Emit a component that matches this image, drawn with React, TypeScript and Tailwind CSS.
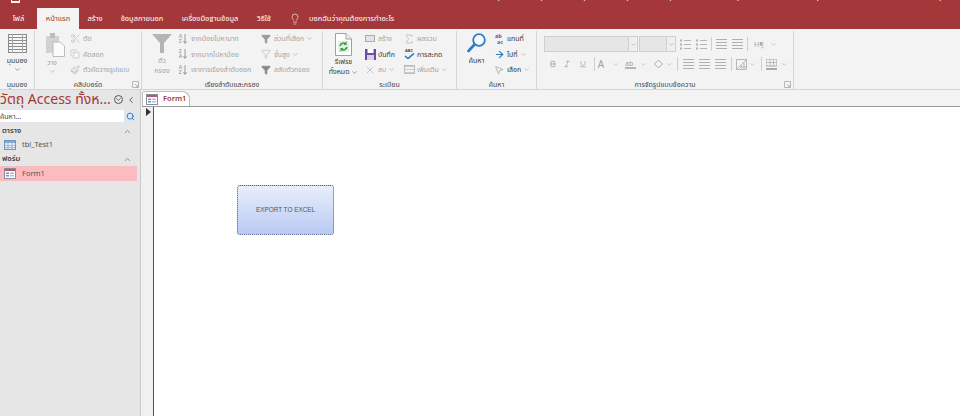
import React from 'react';
import {
  Scissors,
  Copy,
  Paintbrush,
  Filter,
  ChevronDown,
  ChevronUp,
  ChevronLeft,
  Search,
  ArrowRight,
  MousePointer2,
  X,
  Sigma,
  Lightbulb,
  Bold,
  Italic,
  Underline,
} from 'lucide-react';

const font = { fontFamily: '"Noto Sans", "Noto Sans Thai", "Liberation Sans", sans-serif' };

const tabs = [
  { label: 'ไฟล์', width: 'w-[37px]' },
  { label: 'หน้าแรก', width: 'w-[42px]' },
  { label: 'สร้าง', width: 'w-[32px]' },
  { label: 'ข้อมูลภายนอก', width: 'w-[62px]' },
  { label: 'เครื่องมือฐานข้อมูล', width: 'w-[74px]' },
  { label: 'วิธีใช้', width: 'w-[34px]' },
];

const Caret = ({ className = 'text-[#a0a0a0]' }: { className?: string }) => (
  <ChevronDown size={7} strokeWidth={2} className={`inline shrink-0 ${className}`} />
);

const Launcher = () => (
  <svg width="7" height="7" viewBox="0 0 7 7" className="shrink-0">
    <path d="M0.5 0.5H6.5V6.5H0.5Z M3 3L6 6 M6 4V6H4" fill="none" stroke="#a8a8a8" strokeWidth="0.8" />
  </svg>
);

// one ribbon group: controls on top, caption at the bottom
const Group = ({
  width,
  label,
  launcher,
  children,
}: {
  width: string;
  label: string;
  launcher?: boolean;
  children: React.ReactNode;
}) => (
  <div className={`${width} shrink-0 flex flex-col border-r border-[#d6d6d6] h-[58px]`}>
    <div className="flex-1 flex min-h-0">{children}</div>
    <div className="h-[9px] flex items-center justify-center relative text-[7px] text-[#444] leading-none">
      {label}
      {launcher && (
        <span className="absolute right-[2px] top-[1px]">
          <Launcher />
        </span>
      )}
    </div>
  </div>
);

const SmallRow = ({
  icon,
  text,
  dim = true,
  caret,
}: {
  icon: React.ReactNode;
  text: string;
  dim?: boolean;
  caret?: boolean;
}) => (
  <div className={`h-[15.5px] flex items-center gap-[2px] whitespace-nowrap text-[7px] leading-none ${dim ? 'text-[#a4a4a4]' : 'text-[#3a3a3a]'}`}>
    <span className="w-[12px] h-[12px] flex items-center justify-center shrink-0">{icon}</span>
    {text}
    {caret && <Caret />}
  </div>
);

const ViewIcon = () => (
  <svg width="19" height="19" viewBox="0 0 19 19">
    <rect x="0.5" y="0.5" width="18" height="18" fill="#f7f7f7" stroke="#8a8a8a" />
    {[3.5, 6.5, 9.5, 12.5, 15.5].map((y) => (
      <path key={y} d={`M0 ${y}H19`} stroke="#8a8a8a" />
    ))}
    <path d="M4.5 0V19M14.5 0V19" stroke="#a8a8a8" />
  </svg>
);

const PasteIcon = () => (
  <svg width="19" height="24" viewBox="0 0 19 24" className="ml-[6px]">
    <rect x="0" y="3" width="13" height="17" fill="#d2d2d2" />
    <rect x="4" y="0" width="5" height="5" fill="#bdbdbd" />
    <path d="M7 9H14L18.5 13V23.5H7Z" fill="#fbfbfb" stroke="#bcbcbc" />
  </svg>
);

const BigFunnel = () => (
  <svg width="20" height="19" viewBox="0 0 20 19">
    <path d="M0 0H20L12 9V19H8V9Z" fill="#b4b4b4" />
  </svg>
);

const SortIcon = ({ top, bottom }: { top: string; bottom: string }) => (
  <span className="flex items-center gap-[1px]">
    <span className="flex flex-col text-[5px] leading-[5px] text-[#aaa] font-bold">
      <span>{top}</span>
      <span>{bottom}</span>
    </span>
    <svg width="4" height="10" viewBox="0 0 4 10">
      <path d="M2 0V9M0.5 7L2 9.5L3.5 7" stroke="#9a9a9a" fill="none" />
    </svg>
  </span>
);

const RefreshDoc = () => (
  <svg width="17" height="23" viewBox="0 0 17 23">
    <path d="M0.5 0.5H11L16.5 6V22.5H0.5Z" fill="#fdfdfd" stroke="#a0a0a0" />
    <path d="M11 0.5V6H16.5" fill="#eee" stroke="#a0a0a0" />
    <rect x="3" y="8" width="11" height="11" fill="#e3efe4" />
    <path d="M5 13a3.6 3.6 0 0 1 6-2M12 14a3.6 3.6 0 0 1-6 2" fill="none" stroke="#3b9c4a" strokeWidth="1.6" />
    <path d="M11.5 8V12H8.5Z M5.5 19V15H8.5Z" fill="#3b9c4a" />
  </svg>
);

const SaveIcon = () => (
  <svg width="11" height="11" viewBox="0 0 11 11">
    <rect width="11" height="11" fill="#6f4aa8" />
    <rect x="2.5" y="0" width="6" height="4" fill="#fff" />
    <rect x="2" y="6" width="7" height="5" fill="#dcd0e6" />
  </svg>
);

const SpellIcon = () => (
  <span className="flex flex-col items-center leading-none">
    <span className="text-[4px] font-bold text-[#444]">ABC</span>
    <svg width="11" height="6" viewBox="0 0 11 6">
      <path d="M1 3L4 5.5L10 0.5" fill="none" stroke="#2a72c0" strokeWidth="1.6" />
    </svg>
  </span>
);

const BigSearch = () => (
  <svg width="19" height="20" viewBox="0 0 19 20">
    <circle cx="12" cy="7" r="5.8" fill="#f7fbff" stroke="#2d7cc4" strokeWidth="1.8" />
    <path d="M7.5 11.5L1.5 18" stroke="#2d7cc4" strokeWidth="2.6" strokeLinecap="round" />
  </svg>
);

const ReplaceIcon = () => (
  <span className="flex flex-col leading-[6px] text-[5.5px] font-bold">
    <span className="text-[#6f4aa8]">ab</span>
    <span className="text-[#2d7cc4] pl-[2px]">ac</span>
  </span>
);

const ListIcon = () => (
  <svg width="11" height="11" viewBox="0 0 11 11">
    {[1.5, 5.5, 9.5].map((y) => (
      <g key={y}>
        <rect x="0" y={y - 1} width="2" height="2" fill="#b0b0b0" />
        <path d={`M4 ${y}H11`} stroke="#b5b5b5" />
      </g>
    ))}
  </svg>
);

const Lines = ({ className = '' }: { className?: string }) => (
  <span className={`flex flex-col gap-[2px] w-[11px] shrink-0 ${className}`}>
    <span className="h-px bg-[#b0b0b0] block" />
    <span className="h-px bg-[#b0b0b0] block" />
    <span className="h-px bg-[#b0b0b0] block" />
    <span className="h-px bg-[#b0b0b0] block" />
  </span>
);

const Sep = ({ className }: { className: string }) => (
  <span className={`w-px h-[14px] bg-[#cfcfcf] shrink-0 ${className}`} />
);

const FormIcon = () => (
  <svg width="12" height="11" viewBox="0 0 12 11" className="shrink-0">
    <rect x="0.5" y="0.5" width="11" height="10" fill="#fff" stroke="#8d8d99" />
    <rect x="1" y="1" width="10" height="2" fill="#b25a72" />
    <rect x="2" y="4.5" width="3" height="1.5" fill="#6f94c8" />
    <rect x="2" y="7" width="3" height="1.5" fill="#6f94c8" />
    <rect x="6" y="4.5" width="4" height="1.5" fill="#a9c0de" />
    <rect x="6" y="7" width="4" height="1.5" fill="#a9c0de" />
  </svg>
);

const TableIcon = () => (
  <svg width="12" height="10" viewBox="0 0 12 10" className="shrink-0">
    <rect x="0.5" y="0.5" width="11" height="9" fill="#e4ecf6" stroke="#6f93bd" />
    <rect x="1" y="1" width="10" height="2" fill="#86a8d2" />
    <path d="M0.5 5.5H11.5M0.5 7.5H11.5M4 3V9.5M8 3V9.5" stroke="#86a8d2" strokeWidth="0.7" />
  </svg>
);

export default function App() {
  return (
    <div className="w-[960px] h-[416px] overflow-hidden flex flex-col bg-white" style={font}>
      {/* title bar + tabs */}
      <div className="h-[29px] bg-[#a4373a] shrink-0 flex flex-col">
        <div className="h-[8px] relative overflow-hidden">
          <span className="absolute left-[11px] top-0 w-[9px] h-[3px] border-x border-b-2 border-white" />
          <span className="absolute left-[494px] top-[-11px] text-[10px] leading-none text-white whitespace-nowrap">
            บุญงานนนบุญงานนนบุญงานนนบุญงานนนบุญงานนนนนนนบุญงานนนนนนนนนบุญงานนนนนนนนนนนนนนนนบุญ
          </span>
        </div>
        <div className="flex-1 flex items-stretch text-[7.5px] text-white">
          {tabs.map((t, i) => (
            <div
              key={t.label}
              className={`flex items-center justify-center leading-none ${t.width} ${
                i === 1 ? 'bg-[#f3f3f3] text-[#a4373a]' : ''
              }`}
            >
              {t.label}
            </div>
          ))}
          <div className="flex items-center gap-[8px] pl-[8px] text-[7.5px]">
            <Lightbulb size={12} strokeWidth={1.2} />
            บอกฉันว่าคุณต้องการทำอะไร
          </div>
        </div>
      </div>

      {/* ribbon */}
      <div className="h-[61px] shrink-0 bg-[#f3f3f3] border-b border-[#d4d4d4] flex items-start pt-[2px]">
        <Group width="w-[35px]" label="มุมมอง">
          <div className="w-full flex flex-col items-center pt-[3px] text-[7px] leading-none text-[#3a3a3a]">
            <ViewIcon />
            <span className="mt-[4px]">มุมมอง</span>
            <Caret className="mt-[2px] text-[#666]" />
          </div>
        </Group>
        <Group width="w-[107px]" label="คลิปบอร์ด" launcher>
          <div className="w-[34px] flex flex-col items-center pt-[2px] text-[7px] leading-none text-[#a4a4a4]">
            <PasteIcon />
            <span className="mt-[2px]">วาง</span>
            <Caret className="mt-[2px]" />
          </div>
          <div>
            <SmallRow icon={<Scissors size={11} strokeWidth={1} />} text="ตัด" />
            <SmallRow icon={<Copy size={10} strokeWidth={1} />} text="คัดลอก" />
            <SmallRow icon={<Paintbrush size={10} strokeWidth={1.4} />} text="ตัวคัดวางรูปแบบ" />
          </div>
        </Group>
        <Group width="w-[181px]" label="เรียงลำดับและกรอง">
          <div className="w-[35px] pl-[5px] flex flex-col items-center pt-[3px] text-[7px] leading-[10px] text-[#a4a4a4]">
            <BigFunnel />
            <span className="mt-[3px]">ตัว</span>
            <span>กรอง</span>
          </div>
          <div className="w-[83px]">
            <SmallRow icon={<SortIcon top="A" bottom="Z" />} text="จากน้อยไปหามาก" />
            <SmallRow icon={<SortIcon top="Z" bottom="A" />} text="จากมากไปหาน้อย" />
            <SmallRow icon={<SortIcon top="A" bottom="Z" />} text="เอาการเรียงลำดับออก" />
          </div>
          <div>
            <SmallRow icon={<Filter size={10} fill="#9a9a9a" stroke="#9a9a9a" />} text="ส่วนที่เลือก" caret />
            <SmallRow icon={<Filter size={10} strokeWidth={1.2} />} text="ขั้นสูง" caret />
            <SmallRow icon={<Filter size={10} fill="#8a8a8a" stroke="#8a8a8a" />} text="สลับตัวกรอง" />
          </div>
        </Group>
        <Group width="w-[134px]" label="ระเบียน">
          <div className="w-[41px] flex flex-col items-center pt-[2px] text-[7px] leading-[10px] text-[#3a3a3a]">
            <RefreshDoc />
            <span className="mt-[1px]">รีเฟรช</span>
            <span className="whitespace-nowrap">ทั้งหมด <Caret className="text-[#666]" /></span>
          </div>
          <div className="w-[39px]">
            <SmallRow icon={<span className="w-[10px] h-[7px] border border-[#aaa] bg-[#e4e4e4] block" />} text="สร้าง" />
            <SmallRow icon={<SaveIcon />} text="บันทึก" dim={false} />
            <SmallRow icon={<X size={12} strokeWidth={1.2} />} text="ลบ" caret />
          </div>
          <div>
            <SmallRow icon={<Sigma size={12} strokeWidth={1.2} />} text="ผลรวม" />
            <SmallRow icon={<SpellIcon />} text="การสะกด" dim={false} />
            <SmallRow icon={<span className="w-[11px] h-[9px] border border-[#bbb] block bg-[linear-gradient(#ccc_1px,transparent_1px)] bg-[length:3px_3px]" />} text="เพิ่มเติม" caret />
          </div>
        </Group>
        <Group width="w-[80px]" label="ค้นหา">
          <div className="w-[36px] pl-[3px] flex flex-col items-center pt-[2px] text-[7px] leading-none text-[#3a3a3a]">
            <BigSearch />
            <span className="mt-[4px]">ค้นหา</span>
          </div>
          <div>
            <SmallRow icon={<ReplaceIcon />} text="แทนที่" dim={false} />
            <SmallRow icon={<ArrowRight size={11} strokeWidth={2.5} className="text-[#2d7cc4]" />} text="ไปที่" dim={false} caret />
            <SmallRow icon={<MousePointer2 size={10} strokeWidth={1} className="text-[#666]" />} text="เลือก" dim={false} caret />
          </div>
        </Group>
        <Group width="w-[257px]" label="การจัดรูปแบบข้อความ" launcher>
          <div className="flex flex-col pl-[7px] pt-[5px] gap-[4px]">
            <div className="flex items-center h-[16px] text-[#b0b0b0]">
              <div className="w-[94px] h-[16px] bg-[#e6e6e6] border border-[#cfcfcf] flex justify-end">
                <span className="w-[9px] border-l border-[#cfcfcf] bg-[#efefef] flex items-center justify-center"><Caret /></span>
              </div>
              <div className="w-[37px] h-[16px] ml-[1px] bg-[#e6e6e6] border border-[#cfcfcf] flex justify-end">
                <span className="w-[9px] border-l border-[#cfcfcf] bg-[#efefef] flex items-center justify-center"><Caret /></span>
              </div>
              <span className="ml-[4px]"><ListIcon /></span>
              <span className="ml-[5px]"><ListIcon /></span>
              <Sep className="ml-[4px]" />
              <Lines className="ml-[4px]" />
              <Lines className="ml-[5px]" />
              <Sep className="ml-[4px]" />
              <span className="w-[10px] ml-[6px] text-[7px] text-[#a4a4a4] leading-none">H¶</span>
              <Caret className="ml-[6px] text-[#b0b0b0]" />
            </div>
            <div className="flex items-center h-[16px] pl-[5px] text-[#a0a0a0]">
              <Bold size={8} strokeWidth={2.5} className="shrink-0" />
              <Italic size={8} className="ml-[6px] shrink-0" />
              <Underline size={8} className="ml-[8px] shrink-0" />
              <Sep className="ml-[7px]" />
              <span className="w-[10px] ml-[1px] text-center text-[10px] leading-none">A</span>
              <Caret className="ml-[6px] text-[#b0b0b0]" />
              <span className="ml-[6px] w-[11px] h-[9px] border-b-2 border-[#b5b5b5] text-[7px] leading-none shrink-0">ab</span>
              <Caret className="ml-[4px] text-[#b0b0b0]" />
              <svg width="11" height="10" viewBox="0 0 11 10" className="ml-[6px] shrink-0">
                <path d="M5.5 1L9.5 5L5.5 9L1.5 5Z" fill="none" stroke="#aaa" />
              </svg>
              <Caret className="ml-[2px] text-[#b0b0b0]" />
              <Sep className="ml-[4px]" />
              <Lines className="ml-[5px]" />
              <Lines className="ml-[5px]" />
              <Lines className="ml-[5px]" />
              <Sep className="ml-[5px]" />
              <svg width="11" height="11" viewBox="0 0 11 11" className="ml-[4px] shrink-0">
                <path d="M0.5 0.5H10.5V10.5H0.5Z M0.5 10.5L10.5 0.5 M5 6V10.5 M8 3.5V10.5 M5 8H10.5" fill="none" stroke="#aaa" strokeWidth="0.8" />
              </svg>
              <Caret className="ml-[2px] text-[#b0b0b0]" />
              <Sep className="ml-[5px]" />
              <svg width="11" height="11" viewBox="0 0 11 11" className="ml-[4px] shrink-0">
                <rect x="0" y="0" width="11" height="7" fill="none" stroke="#aaa" />
                <path d="M0 3.5H11M4 0V7M7.5 0V7" stroke="#aaa" strokeWidth="0.7" />
                <rect x="0" y="9" width="11" height="2" fill="#aaa" />
              </svg>
              <Caret className="ml-[4px] text-[#b0b0b0]" />
            </div>
          </div>
        </Group>
      </div>

      {/* body */}
      <div className="flex-1 flex min-h-0">
        {/* navigation pane */}
        <div className="w-[140px] shrink-0 bg-[#e6e6e6] flex flex-col text-[#444]">
          <div className="h-[18px] flex items-center overflow-hidden relative">
            <span className="text-[14px] leading-none text-[#a4373a] whitespace-nowrap">วัตถุ Access ทั้งห...</span>
            <span className="absolute left-[114px] top-[5px] w-[9px] h-[9px] rounded-full border border-[#555] flex items-center justify-center">
              <ChevronDown size={7} strokeWidth={2.5} />
            </span>
            <ChevronLeft size={10} className="absolute left-[126px] top-[5px]" />
          </div>
          <div className="h-[12px] w-[137px] bg-white flex items-center justify-between text-[7px] leading-none mt-[2px]">
            <span>ค้นหา...</span>
            <span className="w-[13px] h-[12px] bg-[#dfe6ee] flex items-center justify-center">
              <Search size={9} strokeWidth={2.5} className="text-[#2d7cc4]" />
            </span>
          </div>
          <div className="h-[14px] flex items-center justify-between pl-[2px] pr-[8px] text-[7.5px] font-semibold leading-none mt-[2px]">
            ตาราง
            <ChevronUp size={9} className="text-[#777]" />
          </div>
          <div className="h-[14px] flex items-center gap-[6px] pl-[4px] text-[7.5px] text-[#555] leading-none">
            <TableIcon />
            tbl_Test1
          </div>
          <div className="h-[14px] flex items-center justify-between pl-[2px] pr-[8px] text-[7.5px] font-semibold leading-none">
            ฟอร์ม
            <ChevronUp size={9} className="text-[#777]" />
          </div>
          <div className="h-[15px] w-[137px] bg-[#fbbcc0] flex items-center gap-[6px] pl-[4px] text-[7.5px] text-[#555] leading-none">
            <FormIcon />
            Form1
          </div>
        </div>
        <div className="w-[2px] shrink-0 bg-[#f3f3f3] border-l border-[#c8c8c8]" />

        {/* document area */}
        <div className="flex-1 flex flex-col min-w-0">
          <div className="h-[16px] shrink-0 bg-[#f3f3f3] flex items-end">
            <div className="w-[48px] h-[15px] bg-white border border-b-0 border-[#bdbdbd] rounded-tl-[2px] rounded-tr-[8px] flex items-center gap-[5px] pl-[3px] text-[7.5px] font-semibold text-[#a4373a] leading-none">
              <FormIcon />
              Form1
            </div>
          </div>
          <div className="flex-1 flex min-h-0 border-t border-[#9a9a9a]">
            <div className="w-[12px] shrink-0 bg-[#f0f0f0] border-r border-[#555] pt-[1px] pl-[4px]">
              <span className="block w-0 h-0 border-y-[4px] border-y-transparent border-l-[5px] border-l-[#333]" />
            </div>
            <div className="flex-1 bg-white pl-[83px] pt-[78px]">
              <div className="w-[97px] h-[50px] rounded-[3px] border border-dotted border-[#4a5f8a] bg-gradient-to-b from-[#e8eefb] to-[#b9c9f2] flex items-center justify-center text-[6.4px] text-[#555] leading-none" style={{ fontFamily: '"Liberation Sans", sans-serif' }}>
                EXPORT TO EXCEL
              </div>
            </div>
          </div>
        </div>
      </div>
    </div>
  );
}
